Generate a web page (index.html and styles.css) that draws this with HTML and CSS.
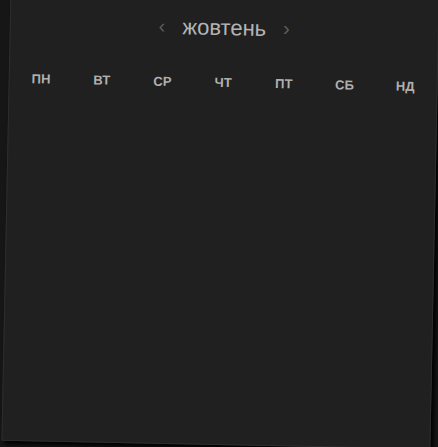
FILE: index.html
```
<!DOCTYPE html>
<html lang="uk">
<head>
<meta charset="utf-8">
<link rel="stylesheet" href="styles.css">
</head>
<body>
<div class="panel">
  <div class="header">
    <span class="nav">&#8249;</span>
    <span class="month">жовтень</span>
    <span class="nav">&#8250;</span>
  </div>
  <div class="weekdays">
    <span>ПН</span><span>ВТ</span><span>СР</span><span>ЧТ</span><span>ПТ</span><span>СБ</span><span>НД</span>
  </div>
</div>
</body>
</html>
```
FILE: styles.css
```
html, body {
  margin: 0;
  padding: 0;
  width: 438px;
  height: 447px;
  overflow: hidden;
  background: #161616;
}
.panel {
  box-sizing: border-box;
  width: 429px;
  height: 459px;
  margin: -14px 0 0 6px;
  background: #202020;
  border: 1px solid #2e2e2e;
  box-shadow: 3px 3px 4px #000;
  transform: rotate(1.15deg);
  font-family: "Liberation Sans", Arial, sans-serif;
  padding: 0 1px;
}
.header {
  display: flex;
  justify-content: center;
  align-items: center;
  gap: 17px;
  padding-top: 29px;
  height: 26px;
}
.month {
  font-size: 22px;
  color: #b4b4b4;
  padding-bottom: 2px;
}
.nav {
  font-size: 20px;
  color: #5c5c5c;
  padding-bottom: 4px;
}
.weekdays {
  display: grid;
  grid-template-columns: repeat(7, 1fr);
  margin-top: 33px;
  font-size: 13px;
  font-weight: bold;
  color: #b0b0b0;
  text-align: center;
}
```
